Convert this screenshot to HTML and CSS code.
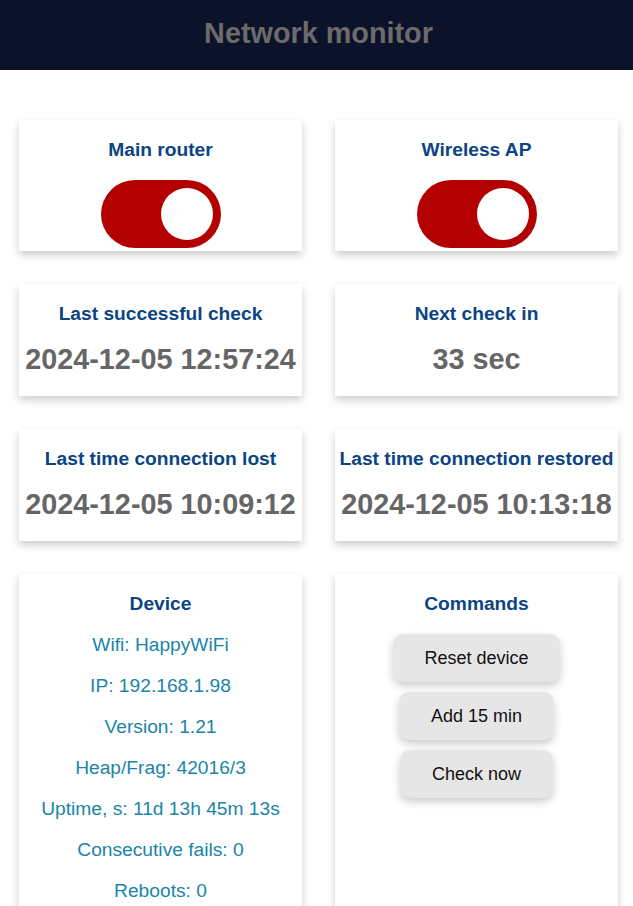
FILE: index.html
```
<!DOCTYPE html>
<html>
<head>
<meta charset="utf-8">
<link rel="stylesheet" href="styles.css">
</head>
<body>
<header class="topbar"><h1 class="topbar-title">Network monitor</h1></header>
<main class="grid">
  <section class="card card-switch">
    <h3 class="card-title">Main router</h3>
    <div class="toggle"><span class="knob"></span></div>
  </section>
  <section class="card card-switch">
    <h3 class="card-title">Wireless AP</h3>
    <div class="toggle"><span class="knob"></span></div>
  </section>
  <section class="card card-value">
    <h3 class="card-title">Last successful check</h3>
    <div class="value">2024-12-05 12:57:24</div>
  </section>
  <section class="card card-value">
    <h3 class="card-title">Next check in</h3>
    <div class="value">33 sec</div>
  </section>
  <section class="card card-value">
    <h3 class="card-title">Last time connection lost</h3>
    <div class="value">2024-12-05 10:09:12</div>
  </section>
  <section class="card card-value">
    <h3 class="card-title">Last time connection restored</h3>
    <div class="value">2024-12-05 10:13:18</div>
  </section>
  <section class="card card-list">
    <h3 class="card-title">Device</h3>
    <p class="info">Wifi: HappyWiFi</p>
    <p class="info">IP: 192.168.1.98</p>
    <p class="info">Version: 1.21</p>
    <p class="info">Heap/Frag: 42016/3</p>
    <p class="info">Uptime, s: 11d 13h 45m 13s</p>
    <p class="info">Consecutive fails: 0</p>
    <p class="info">Reboots: 0</p>
  </section>
  <section class="card card-list">
    <h3 class="card-title">Commands</h3>
    <button class="btn">Reset device</button>
    <button class="btn">Add 15 min</button>
    <button class="btn">Check now</button>
  </section>
</main>
</body>
</html>
```
FILE: styles.css
```
html, body {
  margin: 0;
  padding: 0;
  background: #ffffff;
  font-family: "Liberation Sans", Arial, sans-serif;
}

.topbar {
  height: 70px;
  background: #0c1229;
  display: flex;
  align-items: center;
  justify-content: center;
}

.topbar-title {
  margin: 0 0 4px 4px;
  font-size: 28.8px;
  font-weight: bold;
  color: #6b6b6b;
  line-height: 33px;
}

.grid {
  display: grid;
  grid-template-columns: 283px 283px;
  column-gap: 33px;
  row-gap: 33px;
  padding: 50px 15px 20px 19px;
}

.card {
  background: #ffffff;
  box-shadow: 0 4px 8px 0 rgba(0, 0, 0, 0.2);
  display: flex;
  flex-direction: column;
  align-items: center;
  text-align: center;
}

.card-title {
  margin: 0;
  font-size: 19.2px;
  line-height: 22px;
  font-weight: bold;
  color: #0b4483;
}

.card-switch {
  padding: 19px 0 3px 0;
}

.toggle {
  margin-top: 19px;
  width: 120px;
  height: 68px;
  border-radius: 34px;
  background: #b30000;
  display: flex;
  align-items: center;
  justify-content: flex-end;
  padding-right: 8px;
  box-sizing: border-box;
}

.knob {
  width: 52px;
  height: 52px;
  border-radius: 50%;
  background: #ffffff;
}

.card-value {
  padding: 19px 0 20px 0;
}

.value {
  margin-top: 18px;
  font-size: 28.8px;
  line-height: 33px;
  font-weight: bold;
  color: #666666;
}

.card-list {
  padding: 19px 0 20px 0;
}

.info {
  margin: 19px 0 0 0;
  font-size: 19.2px;
  line-height: 22px;
  color: #1a85a8;
}

.btn {
  margin-top: 10px;
  font-family: "Liberation Sans", Arial, sans-serif;
  font-size: 18px;
  line-height: 22px;
  color: #111111;
  background: #e6e6e6;
  border: none;
  border-radius: 10px;
  padding: 13px 31.5px;
  box-shadow: 0 4px 8px 0 rgba(0, 0, 0, 0.2);
}

.card-title + .btn {
  margin-top: 19px;
}
```
